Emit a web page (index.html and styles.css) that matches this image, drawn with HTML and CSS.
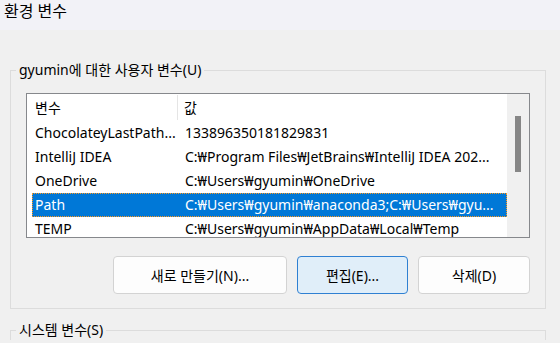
FILE: index.html
```html
<!DOCTYPE html>
<html lang="ko">
<head>
<meta charset="utf-8">
<title>환경 변수</title>
<link rel="stylesheet" href="styles.css">
</head>
<body>
<div class="titlebar">환경 변수</div>
<fieldset class="group user">
  <legend>gyumin에 대한 사용자 변수(U)</legend>
  <div class="listview">
    <div class="list">
      <div class="header">
        <div class="hcol1">변수</div>
        <div class="hcol2">값</div>
      </div>
      <div class="row"><div class="c1">ChocolateyLastPath...</div><div class="c2">133896350181829831</div></div>
      <div class="row"><div class="c1">IntelliJ IDEA</div><div class="c2">C:₩Program Files₩JetBrains₩IntelliJ IDEA 202...</div></div>
      <div class="row"><div class="c1">OneDrive</div><div class="c2">C:₩Users₩gyumin₩OneDrive</div></div>
      <div class="row selected"><div class="c1">Path</div><div class="c2">C:₩Users₩gyumin₩anaconda3;C:₩Users₩gyu...</div></div>
      <div class="row"><div class="c1">TEMP</div><div class="c2">C:₩Users₩gyumin₩AppData₩Local₩Temp</div></div>
    </div>
    <div class="scrollbar"><div class="thumb"></div></div>
  </div>
  <div class="buttons">
    <button class="btn wide">새로 만들기(N)...</button>
    <button class="btn default">편집(E)...</button>
    <button class="btn last">삭제(D)</button>
  </div>
</fieldset>
<fieldset class="group system">
  <legend>시스템 변수(S)</legend>
</fieldset>
</body>
</html>
```
FILE: styles.css
```css
html, body {
  margin: 0;
  padding: 0;
}
body {
  background: #f0f0f0;
  font-family: "Noto Sans", "Noto Sans CJK KR", sans-serif;
  font-size: 14px;
  color: #000;
  width: 560px;
  height: 343px;
  overflow: hidden;
}
.titlebar {
  height: 30px;
  background: #f2f2f7;
  font-size: 16px;
  line-height: 22px;
  padding-left: 4px;
  box-sizing: border-box;
}
.group {
  border: 1px solid #dcdcdc;
  margin: 30px 14px 0 10px;
  padding: 13px 15px 14px 5px;
  min-width: 0;
}
.group legend {
  padding: 0 3px;
  line-height: 20px;
  height: 20px;
}
.system {
  margin-top: 11px;
  padding: 0 15px 0 5px;
  height: 2px;
  border-bottom: none;
}
.listview {
  margin-left: 10px;
  height: 145px;
  box-sizing: border-box;
  border: 1px solid #86888c;
  background: #fff;
  display: flex;
  overflow: hidden;
}
.list {
  flex: 1;
  min-width: 0;
}
.header {
  display: flex;
  height: 27px;
  line-height: 27px;
}
.hcol1 {
  width: 151px;
  padding-left: 8px;
  box-sizing: border-box;
  border-right: 1px solid #e5e5e5;
  margin: 1px 0 1px 0;
  line-height: 25px;
}
.hcol2 {
  padding-left: 6px;
}
.row {
  display: flex;
  height: 24px;
  line-height: 22px;
  margin-left: 5px;
  border: 1px solid transparent;
  box-sizing: border-box;
  white-space: nowrap;
}
.row .c1 {
  width: 145px;
  padding-left: 2px;
  box-sizing: border-box;
  overflow: hidden;
  text-overflow: ellipsis;
}
.row .c2 {
  flex: 1;
  min-width: 0;
  padding-left: 7px;
  padding-right: 5px;
  overflow: hidden;
  text-overflow: ellipsis;
}
.row.selected {
  background: #0078d7;
  color: #fff;
  border: 1px dotted #ff9a1f;
}
.scrollbar {
  width: 22px;
  background: #f0f0f0;
  padding-top: 22px;
  box-sizing: border-box;
}
.thumb {
  width: 6px;
  height: 56px;
  margin-left: 8px;
  background: #868686;
}
.buttons {
  display: flex;
  justify-content: flex-end;
  gap: 10px;
  margin-top: 18px;
}
.btn {
  height: 38px;
  font-family: inherit;
  font-size: 14px;
  color: #000;
  background: #fdfdfd;
  border: 1px solid #d3d3d3;
  border-radius: 4px;
  padding: 0;
}
.btn.wide { width: 174px; }
.btn.default {
  width: 111px;
  background: #e0eef9;
  border-color: #2f80d2;
}
.btn.last { width: 112px; }
```
